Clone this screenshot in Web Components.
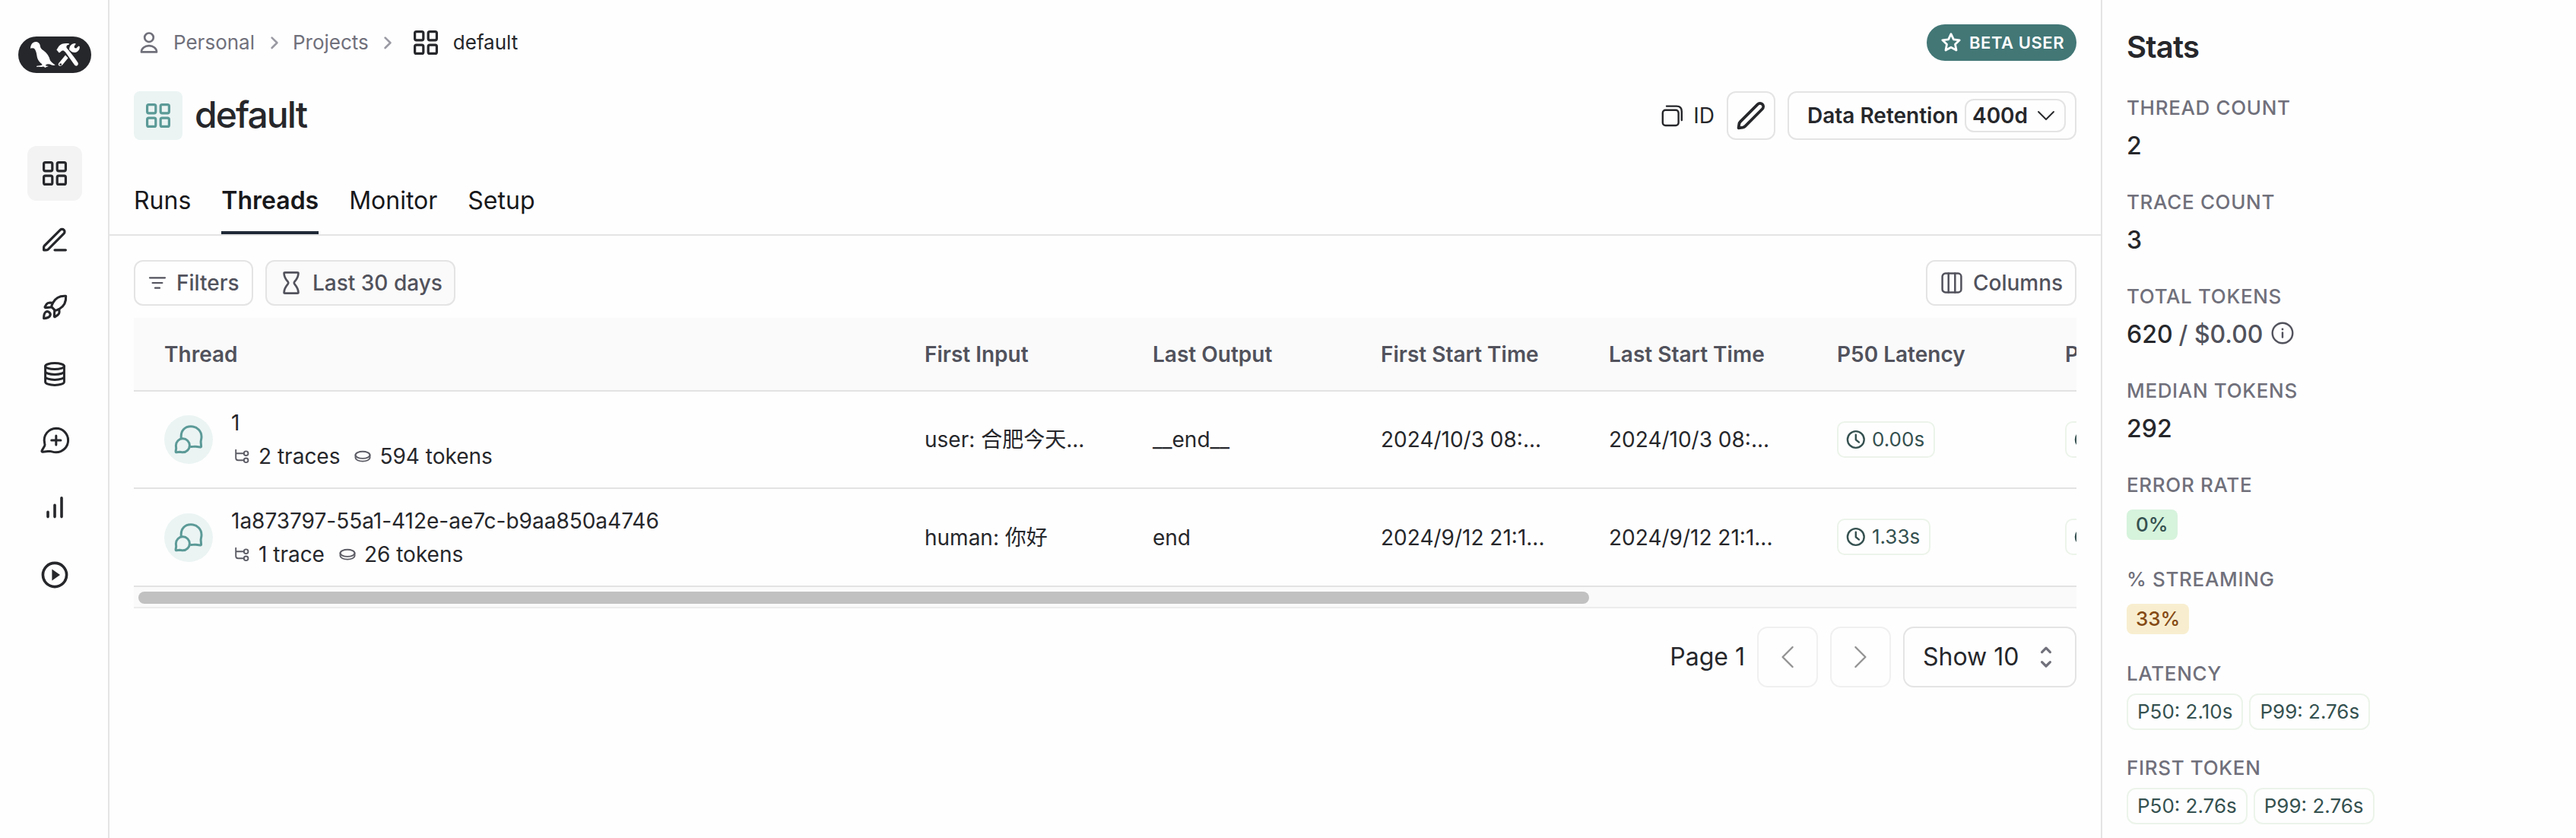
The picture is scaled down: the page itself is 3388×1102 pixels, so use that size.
<!DOCTYPE html>
<html lang="en">
<head>
<meta charset="utf-8">
<title>default - Threads</title>
<style>
  html, body { margin: 0; height: 100%; }
  body {
    font-family: Inter, "Noto Sans CJK SC", sans-serif;
    font-size: 28px; line-height: 44px; color: #26272b; background: #fefefe;
    --line: #e4e4e4; --ink: #26272b; --muted: #70707b; --soft: #51525c; --teal: #5b9a97; --teal-bg: #ebf4f3;
    overflow: hidden;
  }
</style>
</head>
<body>
<app-shell>
  <side-nav slot="nav">
    <nav-item icon="grid" active></nav-item>
    <nav-item icon="edit"></nav-item>
    <nav-item icon="rocket"></nav-item>
    <nav-item icon="database"></nav-item>
    <nav-item icon="message"></nav-item>
    <nav-item icon="bars"></nav-item>
    <nav-item icon="play"></nav-item>
  </side-nav>

  <project-header name="default"></project-header>
  <tab-bar>
    <tab-item>Runs</tab-item>
    <tab-item active>Threads</tab-item>
    <tab-item>Monitor</tab-item>
    <tab-item>Setup</tab-item>
  </tab-bar>
  <tool-bar>
    <tool-button icon="filter" style="width:157px;--pl:16px;--gap:12px">Filters</tool-button>
    <tool-button icon="hourglass" filled style="width:250px;--pl:19px;--gap:15px">Last 30 days</tool-button>
    <tool-button slot="end" icon="columns" style="width:198px;--pl:18px;--gap:14px">Columns</tool-button>
  </tool-bar>
  <thread-table></thread-table>
  <page-controls></page-controls>

  <stats-panel slot="aside">
    <stat-item label="THREAD COUNT">2</stat-item>
    <stat-item label="TRACE COUNT">3</stat-item>
    <stat-item label="TOTAL TOKENS">620 <span style="color:#51525c;white-space:pre">/ $0.00</span><ui-icon name="info" style="margin:-4px 0 0 2px;color:#51525c"></ui-icon></stat-item>
    <stat-item label="MEDIAN TOKENS">292</stat-item>
    <stat-item label="ERROR RATE"><metric-chip tone="green">0%</metric-chip></stat-item>
    <stat-item label="% STREAMING"><metric-chip tone="amber">33%</metric-chip></stat-item>
    <stat-item label="LATENCY"><metric-chip>P50: 2.10s</metric-chip><metric-chip>P99: 2.76s</metric-chip></stat-item>
    <stat-item label="FIRST TOKEN"><metric-chip>P50: 2.76s</metric-chip><metric-chip>P99: 2.76s</metric-chip></stat-item>
  </stats-panel>
</app-shell>

<script>
const ICONS = {
  // name: [width, height, stroke width, markup]
  grid: [32, 32, 3.2, '<rect x="1.6" y="1.6" width="11.2" height="11.2" rx="2"/><rect x="19.2" y="1.6" width="11.2" height="11.2" rx="2"/><rect x="1.6" y="19.2" width="11.2" height="11.2" rx="2"/><rect x="19.2" y="19.2" width="11.2" height="11.2" rx="2"/>'],
  edit: [32, 32, 3.2, '<g transform="translate(-3.2 -3.2) scale(1.6)" stroke-width="2"><path d="M12 20H21M3 20H4.675C5.164 20 5.408 20 5.639 19.945C5.843 19.896 6.038 19.815 6.217 19.705C6.418 19.582 6.591 19.409 6.937 19.063L19.5 6.5C20.328 5.672 20.328 4.328 19.5 3.5C18.672 2.672 17.328 2.672 16.5 3.5L3.937 16.063C3.591 16.409 3.418 16.582 3.295 16.783C3.185 16.962 3.104 17.157 3.055 17.362C3 17.592 3 17.836 3 18.326V20Z"/></g>'],
  rocket: [34, 34, 3.1, '<path d="M31.6 2.4C24 1.8 18 5 14.5 11.2L12.9 15.2C12.6 16 12.8 16.6 13.4 17.2L16.8 20.6C17.4 21.2 18 21.4 18.8 21.1L22.8 19.5C29 16 32.2 10 31.6 2.4Z"/><path d="M14.6 11.2L10.4 11C8.6 11 7.2 11.6 6.2 13L4.2 16.2C3.8 17 4.1 17.6 4.8 17.6L12.6 17"/><path d="M22.8 19.5L23 23.4C23 25 22.4 26.2 21 27.1L17.6 29.4C16.8 30 16.3 29.6 16.3 28.8L16.8 20.6"/><path d="M2.6 31.6C2.6 27.4 3.2 24.8 5 23.4C6.6 22.2 8.6 22.5 10 23.9C11.4 25.3 11.5 27.4 10.3 29C8.9 30.8 6.6 31.4 2.6 31.6Z"/>'],
  database: [28, 32, 3, '<ellipse cx="14" cy="5.6" rx="12.4" ry="4"/><path d="M1.6 5.6V26.2C1.6 28.5 7 30.4 14 30.4S26.4 28.5 26.4 26.2V5.6M1.6 12.3C1.6 14.6 7 16.4 14 16.4S26.4 14.6 26.4 12.3M1.6 19.2C1.6 21.5 7 23.4 14 23.4S26.4 21.5 26.4 19.2"/>'],
  message: [38, 36, 3, '<path d="M20.8 1.2A15.8 15.8 0 1 1 20.8 32.8C17.9 32.8 16.2 32.2 14.4 31.7C12.9 31.2 11.9 31.4 9.9 31.6L3.4 32.3C2.2 32.5 1.6 31.7 2.1 30.6L5.6 24.4C6.3 22.9 6.1 22.1 5.6 20.4A15.8 15.8 0 0 1 20.8 1.2Z"/><path d="M20.8 10.9V23.1M14.7 17H26.9"/>'],
  bars: [24, 30, 3.6, '<path d="M3 26.6V20.2M12 26.6V11.2M21 26.6V1.8"/>'],
  play: [36, 36, 3.6, '<circle cx="18" cy="18" r="15.6"/><path d="M14.4 10.6V25.4L25 18Z" fill="currentColor" stroke="none"/>'],
  person: [32, 32, 2.7, '<circle cx="16" cy="9.3" r="5.8"/><path d="M6 28.4C6 23.6 10.4 20.2 16 20.2S26 23.6 26 28.4Z"/>'],
  crumb: [16, 20, 2.6, '<path d="M4.6 3.6L11.4 10.3L4.6 17"/>'],
  star: [28, 28, 2.8, '<path d="M14 2.7L17.4 9.8L25.2 10.8L19.5 16.2L21 24L14 20.2L7 24L8.5 16.2L2.8 10.8L10.6 9.8Z"/>'],
  copy: [32, 32, 2.4, '<rect x="3.8" y="8.8" width="20.8" height="20.2" rx="3.6"/><path d="M9 3.6H22C26.4 3.6 28.8 6 28.8 10.4V22"/>'],
  pencil: [40, 40, 3.8, '<path d="M3.6 36.3L4.3 31.2C4.6 29.4 5 28.8 6 27.8L28.5 5.3C30.3 3.5 33.2 3.4 34.9 5.1C36.6 6.8 36.5 9.7 34.7 11.5L12.4 33.8C11.4 34.8 10.6 35.3 9 35.6Z"/>'],
  down: [24, 16, 1.9, '<path d="M2 3L12 13L22 3"/>'],
  filter: [26, 28, 2.2, '<path d="M3 7.3H23M6.6 14H19.4M10 20.7H16"/>'],
  hourglass: [26, 32, 2.7, '<path d="M3.6 3.2C3.6 2.6 4.2 2.3 5 2.3H21C21.8 2.3 22.4 2.6 22.4 3.2C22.4 9 20 11.4 17.3 14.6C16.6 15.5 16.6 16.5 17.3 17.4C20 20.6 22.4 23 22.4 28.8C22.4 29.4 21.8 29.7 21 29.7H5C4.2 29.7 3.6 29.4 3.6 28.8C3.6 23 6 20.6 8.7 17.4C9.4 16.5 9.4 15.5 8.7 14.6C6 11.4 3.6 9 3.6 3.2Z"/>'],
  columns: [28, 28, 2.5, '<rect x="1.6" y="1.6" width="24.8" height="24.8" rx="4"/><path d="M9.7 1.6V26.4M18.3 1.6V26.4"/>'],
  chats: [40, 40, 3, '<path d="M10.3 17.8C9.4 7.8 15.6 2.8 23 2.8C31.5 2.8 37.4 9 37 17.2C36.8 19.6 36.2 21 36.1 23L36.6 28.8C36.7 29.7 36.3 30.1 35.4 30L29.4 29.2C27.4 29 25.8 29.4 23.2 29.6"/><path d="M12.4 18.8A9 9 0 0 1 12.4 36.8C10.8 36.8 9.8 36.4 8.4 36.3L4.3 36.8C3.4 36.9 3 36.5 3.1 35.6L3.7 31.8C3.7 30.4 3.4 29.2 3.4 27.8A9 9 0 0 1 12.4 18.8Z"/>'],
  tree: [28, 28, 1.9, '<path d="M6.2 5.8V16.3C6.2 18.3 7.2 19.3 9.2 19.3H16.8M6.2 10.2H16.8"/><circle cx="19.6" cy="10.2" r="2.8"/><circle cx="19.6" cy="19.3" r="2.8"/>'],
  coin: [28, 28, 1.9, '<ellipse cx="14" cy="12.3" rx="9.5" ry="4.6"/><path d="M4.5 12.3V16C4.5 18.5 8.7 20.6 14 20.6S23.5 18.5 23.5 16V12.3"/>'],
  clock: [26, 26, 2.4, '<circle cx="12.8" cy="13" r="10.9"/><path d="M12.8 6.8V13.2L17 16.6"/>'],
  info: [30, 30, 2.4, '<circle cx="15" cy="15" r="13.3"/><path d="M15 14.4V20.6"/><path d="M15 9.9V10" stroke-width="2.8"/>'],
  prev: [32, 32, 2.4, '<path d="M22.6 3L9.6 16L22.6 29"/>'],
  next: [32, 32, 2.4, '<path d="M9.4 3L22.4 16L9.4 29"/>'],
  sort: [32, 32, 3.2, '<path d="M10.6 9.6L16 4.2L21.4 9.6M10.6 22.6L16 28L21.4 22.6"/>'],
};

const define = (tag, css, html) => customElements.define(tag, class extends HTMLElement {
  constructor() {
    super();
    this.attachShadow({ mode: 'open' });
  }
  connectedCallback() {
    this.shadowRoot.innerHTML = `<style>*{box-sizing:border-box}:host{box-sizing:border-box}${css}</style>` +
      (typeof html === 'function' ? html(this) : html);
  }
});

define('ui-icon', ':host{display:inline-flex;flex:none}svg{display:block;overflow:visible}', el => {
  const [w, h, sw, body] = ICONS[el.getAttribute('name')];
  return `<svg width="${w}" height="${h}" viewBox="0 0 ${w} ${h}" fill="none" stroke="currentColor" stroke-width="${sw}" stroke-linecap="round" stroke-linejoin="round" aria-hidden="true">${body}</svg>`;
});

define('app-shell', `
  :host{display:grid;grid-template-columns:144px minmax(0,1fr) 625px;height:100vh}
  main{display:flex;flex-direction:column;min-width:0}`,
  '<slot name="nav"></slot><main><slot></slot></main><slot name="aside"></slot>');

define('brand-logo', ':host{display:block}svg{display:block}', `
  <svg width="96" height="48" viewBox="0 0 96 48" role="img" aria-label="Logo">
    <rect width="96" height="48" rx="24" fill="#26272b"/>
    <g fill="#fff">
      <path d="M16 15.8C16.2 11 18.8 7.2 23 7.1C26.4 7 28.6 9.4 29 13.2C29.4 15.6 30.8 16.8 33 18.2C37.8 21.4 40.6 26 42 31.4C43.4 33.6 45.6 35.4 48.8 37.6C46.4 38.4 43.8 37.8 41.6 36.6L38.8 36.2L36 37.2L36.4 38.6L40 38.9L36.6 40.2L35.4 41L34.4 40.2L33.2 39.4L30.6 40L26.8 39.8L24 40L24.4 38.8L28.4 38.2L31.4 37.6L31.2 36.2C27.8 33.6 25.4 30.6 24.8 27C24.2 23.6 24 20.6 22 17L20.6 15.4L17.8 15.2Z"/>
      <path d="M50.4 17.4L53.6 12.4C56.2 9.4 61 8.4 66.8 9.2L67 10.6C64 11.2 62.8 12.6 63.6 15L66.6 18.4C70.8 23.8 75.4 29.2 78.4 34.2C79.6 36.6 78 39 75.8 38.6C74.6 38.4 74 37.4 73.2 36.2L62 20.6L59.6 18.6C58 18.2 57 18.6 56 20L53.8 21.6Z"/>
      <path fill-rule="evenodd" d="M67.2 17.4C66.8 13 70 9 74.6 9L75.8 9.8L73.6 12.8L74 15L76.2 15.6L79.4 12.4L80.8 13.2C81 17.8 78 21 73.6 21L71 20.6L69.6 19.6ZM62 24.4L65.6 28.2L58.6 36.8C57 39 54 39.4 53 37.8C52.4 36.6 52.8 35.2 54 34.2ZM55.6 35.6A1.1 1.1 0 1 0 55.7 37.7A1.1 1.1 0 1 0 55.6 35.6Z"/>
    </g>
  </svg>`);

define('side-nav', `
  :host{display:flex;flex-direction:column;align-items:center;padding:48px 0 0 2px;border-right:2px solid var(--line)}
  nav{display:flex;flex-direction:column;gap:16px;margin-top:96px}`,
  '<brand-logo></brand-logo><nav><slot></slot></nav>');

define('nav-item', `
  :host{display:flex;align-items:center;justify-content:center;width:72px;height:72px;border-radius:12px;color:var(--ink)}
  :host([active]){background:#f3f3f3}`,
  el => `<ui-icon name="${el.getAttribute('icon')}"></ui-icon>`);

define('project-header', `
  :host{display:flex;flex-direction:column;padding:32px 32px 0}
  .row{display:flex;align-items:center;justify-content:space-between}
  .crumbs{display:flex;align-items:center;height:48px;font-size:26px;color:var(--muted);padding-left:4px}
  .crumbs ui-icon[name=crumb]{color:#9a9aa4}
  .beta{display:flex;align-items:center;width:197px;height:48px;padding-left:18px;border-radius:24px;background:#427776;color:#fff;font-size:22px;font-weight:600;letter-spacing:.025em}
  .beta span{margin-left:10px;white-space:nowrap}
  .title{margin-top:40px;height:64px}
  .left,.right{display:flex;align-items:center}
  .tile{display:flex;align-items:center;justify-content:center;width:64px;height:64px;border-radius:8px;background:var(--teal-bg);color:var(--teal)}
  h1{margin:-2px 0 0 16px;font-size:48px;line-height:60px;font-weight:500;letter-spacing:-.04em}
  .id{margin:0 16px 0 12px}
  .edit{display:flex;align-items:center;justify-content:center;width:64px;height:64px;border:2px solid var(--line);border-radius:12px}
  .keep{display:flex;align-items:center;justify-content:space-between;width:380px;height:64px;margin-left:16px;padding:0 12px 0 24px;border:2px solid var(--line);border-radius:12px;font-weight:600;white-space:nowrap}
  .pick{display:flex;align-items:center;gap:12px;width:133px;height:44px;padding-left:8px;border:2px solid var(--line);border-radius:12px;line-height:40px}`,
  el => `
  <div class="row">
    <div class="crumbs">
      <ui-icon name="person"></ui-icon><span style="margin:0 18px 0 16px">Personal</span>
      <ui-icon name="crumb"></ui-icon><span style="margin:0 17px 0 16px">Projects</span>
      <ui-icon name="crumb"></ui-icon><ui-icon name="grid" style="margin:0 20px 0 26px;color:#26272b"></ui-icon><span style="color:#26272b">${el.getAttribute('name')}</span>
    </div>
    <div class="beta"><ui-icon name="star"></ui-icon><span>BETA USER</span></div>
  </div>
  <div class="row title">
    <div class="left"><div class="tile"><ui-icon name="grid"></ui-icon></div><h1>${el.getAttribute('name')}</h1></div>
    <div class="right">
      <ui-icon name="copy"></ui-icon><span class="id">ID</span>
      <div class="edit"><ui-icon name="pencil"></ui-icon></div>
      <div class="keep"><span>Data Retention</span><div class="pick"><span>400d</span><ui-icon name="down"></ui-icon></div></div>
    </div>
  </div>`);

define('tab-bar', ':host{display:flex;gap:40px;height:126px;padding:0 32px;border-bottom:2px solid var(--line);align-items:stretch}', '<slot></slot>');
define('tab-item', `
  :host{display:flex;align-items:flex-end;padding-bottom:16px;font-size:32px;line-height:48px;color:#18181b;border-bottom:4px solid transparent}
  :host([active]){font-weight:600;border-color:#1f2937}`, '<slot></slot>');

define('tool-bar', ':host{display:flex;justify-content:space-between;padding:32px 32px 16px}div{display:flex;gap:16px}', '<div><slot></slot></div><slot name="end"></slot>');
define('tool-button', `
  :host{display:flex;align-items:center;gap:var(--gap);height:60px;padding-left:var(--pl);border:2px solid var(--line);border-radius:12px;color:var(--soft);font-weight:500;white-space:nowrap}
  :host([filled]){background:#fafafa}`,
  el => `<ui-icon name="${el.getAttribute('icon')}"></ui-icon><span><slot></slot></span>`);

define('metric-chip', `
  :host{display:inline-flex;align-items:center;height:48px;padding:0 12px;border:2px solid #ecf4ea;border-radius:12px;color:#355150;font-size:26px;line-height:44px;font-weight:400;white-space:nowrap}
  :host([tone]){height:40px;border:0;border-radius:8px;font-weight:500;line-height:40px;margin-top:4px}
  :host([tone=green]){background:#d6f3dc}
  :host([tone=amber]){background:#f8eecf;color:#854a15}
  :host([icon]){padding-left:10px;border-radius:10px}
  ui-icon{margin-right:8px}`,
  el => (el.hasAttribute('icon') ? `<ui-icon name="${el.getAttribute('icon')}"></ui-icon>` : '') + '<slot></slot>');

define('thread-cell', `
  :host{display:flex;align-items:center;gap:24px}
  .avatar{display:flex;align-items:center;justify-content:center;width:64px;height:64px;border-radius:50%;background:var(--teal-bg);color:var(--teal)}
  .meta{display:flex;align-items:center}
  .meta ui-icon{margin-right:8px;color:#5c5c66}
  .meta span{margin-right:16px}`,
  el => `<div class="avatar"><ui-icon name="chats"></ui-icon></div>
  <div><div><slot></slot></div><div class="meta"><ui-icon name="tree"></ui-icon><span>${el.getAttribute('traces')}</span><ui-icon name="coin"></ui-icon><span>${el.getAttribute('tokens')}</span></div></div>`);

define('thread-table', `
  :host{display:block;margin:0 32px;overflow:hidden}
  .row{display:grid;grid-template-columns:1000px repeat(6,300px);align-items:center;height:128px;border-bottom:2px solid #e3e3e3;width:2800px;white-space:nowrap}
  .row>*{padding-left:40px}
  .head{height:97px;background:#fafafa;font-weight:600;color:var(--soft)}
  .last{height:129px}
  .track{height:28px;padding:6px;background:#fafafa;border-bottom:2px solid #ececec}
  .thumb{width:1908px;height:16px;border-radius:8px;background:#c1c1c1}`, `
  <div class="row head"><div>Thread</div><div>First Input</div><div>Last Output</div><div>First Start Time</div><div>Last Start Time</div><div>P50 Latency</div><div>P</div></div>
  <div class="row">
    <thread-cell traces="2 traces" tokens="594 tokens">1</thread-cell>
    <div>user: 合肥今天...</div><div>__end__</div><div>2024/10/3 08:...</div><div>2024/10/3 08:...</div>
    <div><metric-chip icon="clock">0.00s</metric-chip></div><div><metric-chip icon="clock"></metric-chip></div>
  </div>
  <div class="row last">
    <thread-cell traces="1 trace" tokens="26 tokens" style="letter-spacing:-.01px">1a873797-55a1-412e-ae7c-b9aa850a4746</thread-cell>
    <div>human: 你好</div><div>end</div><div>2024/9/12 21:1...</div><div>2024/9/12 21:1...</div>
    <div><metric-chip icon="clock">1.33s</metric-chip></div><div><metric-chip icon="clock"></metric-chip></div>
  </div>
  <div class="track"><div class="thumb"></div></div>`);

define('page-controls', `
  :host{display:flex;justify-content:flex-end;align-items:center;gap:16px;padding:24px 32px 0;font-size:32px;line-height:48px}
  .step{display:flex;align-items:center;justify-content:center;width:80px;height:80px;border:2px solid #f0f0f0;border-radius:14px;color:#929293}
  .size{display:flex;align-items:center;gap:20px;width:228px;height:80px;padding-left:24px;border:2px solid var(--line);border-radius:14px}
  .size ui-icon{color:#70707b}
  span{margin-top:-1px}`, `
  <span>Page 1</span>
  <div class="step"><ui-icon name="prev"></ui-icon></div>
  <div class="step"><ui-icon name="next"></ui-icon></div>
  <div class="size"><span>Show 10</span><ui-icon name="sort"></ui-icon></div>`);

define('stats-panel', `
  :host{display:flex;flex-direction:column;gap:32px;padding:36px 32px 0;border-left:2px solid var(--line);overflow:hidden}
  h2{margin:-2px 0 2px;font-size:40px;line-height:56px;font-weight:600;letter-spacing:-.02em}`,
  '<h2>Stats</h2><slot></slot>');

define('stat-item', `
  :host{display:block;flex:none;height:92px}
  .label{height:36px;line-height:36px;font-size:26px;letter-spacing:.025em;color:var(--muted);font-weight:500}
  .value{display:flex;align-items:center;gap:8px;height:48px;margin-top:8px;font-size:32px;line-height:48px;font-weight:500}`,
  el => `<div class="label">${el.getAttribute('label')}</div><div class="value"><slot></slot></div>`);
</script>
</body>
</html>
